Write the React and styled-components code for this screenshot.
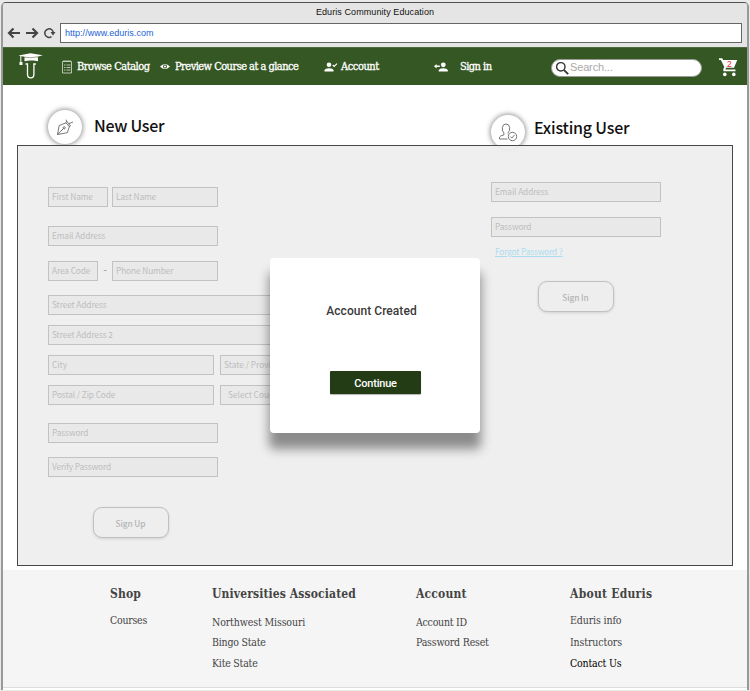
import React from "react";
import styled, { createGlobalStyle } from "styled-components";

const serif = `"DejaVu Serif Condensed", "DejaVu Serif", "Liberation Serif", serif`;
const source = `"Noto Sans CJK SC", "Noto Sans", sans-serif`;

const GlobalStyle = createGlobalStyle`
  * { box-sizing: border-box; }
  body { margin: 0; background: #e9e9e9; overflow: hidden; }
  button, input { margin: 0; padding: 0; }
`;

const Window = styled.div`
  position: relative;
  width: 748px;
  height: 688px;
  margin: 2px 0 0 1px;
  border: 1px solid #505050;
  border-left: 2px solid #999;
  border-right: 2px solid #999;
  border-bottom: 0;
  border-radius: 5px 5px 0 0;
  background: #fff;
  display: flex;
  flex-direction: column;
`;
const Chrome = styled.header`
  height: 44px;
  background: #e5e5e5;
  border-radius: 4px 4px 0 0;
  display: flex;
  flex-direction: column;
`;
const WindowTitle = styled.div`
  height: 20px;
  text-align: center;
  font: 9px/19px "Liberation Sans", sans-serif;
  letter-spacing: 0.08px;
  color: #111;
`;
const AddressRow = styled.div`
  display: flex;
  height: 20px;
  padding: 0 5px 0 4px;
`;
const ChromeIcons = styled.div`
  display: flex;
  width: 53px;
  svg { display: block; }
`;
const Address = styled.div`
  flex: 1;
  height: 20px;
  padding-left: 4px;
  background: #fff;
  border: 1px solid #666;
  font: 9px/18px "Liberation Sans", sans-serif;
  letter-spacing: 0.02px;
  color: #1c5fd6;
`;
const Nav = styled.nav`
  height: 38px;
  background: #355723;
  border-top: 1px solid #4d6b3c;
  display: flex;
  align-items: center;
  svg { display: block; flex: none; }
`;
const Logo = styled.div`
  width: 59px;
  padding-left: 15px;
`;
const NavLink = styled.a`
  width: ${(p) => p.$width}px;
  display: flex;
  align-items: center;
  gap: ${(p) => p.$gap}px;
  color: #fff;
  font: 11px/20px ${serif};
  -webkit-text-stroke: 0.3px #fff;
  letter-spacing: ${(p) => p.$track}px;
  white-space: nowrap;
`;
const Search = styled.div`
  width: 151px;
  height: 18px;
  margin-top: 2px;
  border: 1px solid #9a9a9a;
  border-radius: 9px;
  background: #fff;
  display: flex;
  align-items: center;
  gap: 1px;
  padding-left: 3px;
  font: 11px/15px "Liberation Sans", sans-serif;
  letter-spacing: -0.15px;
  color: #aaa;
`;
const SearchText = styled.span`
  height: 16px;
`;
const Cart = styled.div`
  position: relative;
  margin-left: 17px;
  width: 20px;
`;
const CartCount = styled.span`
  position: absolute;
  left: 8px;
  top: 2px;
  font: 8.5px/10px "Liberation Sans", sans-serif;
  color: #f5222d;
`;
const Headings = styled.div`
  height: 60px;
  display: flex;
  padding-left: 45px;
`;
const Heading = styled.div`
  width: ${(p) => p.$width}px;
  margin-top: ${(p) => p.$top}px;
  display: flex;
  gap: ${(p) => p.$gap}px;
`;
const Circle = styled.div`
  width: 34px;
  height: 34px;
  border-radius: 50%;
  background: #fff;
  box-shadow: 0 0 5px 1px rgba(0, 0, 0, 0.42);
  display: flex;
  align-items: center;
  justify-content: center;
`;
const HeadingText = styled.h2`
  margin: 0;
  font: 500 16px/${(p) => p.$line}px ${source};
  letter-spacing: ${(p) => p.$track}px;
  color: #111;
`;
const Panel = styled.main`
  position: relative;
  width: 716px;
  height: 421px;
  margin-left: 14px;
  border: 1px solid #484848;
  background: rgba(238, 238, 238, 0.93);
  display: flex;
  padding-left: 30px;
`;
const SignUpForm = styled.form`
  width: 443px;
  padding-top: 41px;
`;
const SignInForm = styled.form`
  width: 170px;
  padding-top: 36px;
`;
const FieldRow = styled.div`
  display: flex;
  height: 20px;
  margin-bottom: ${(p) => p.$after}px;
`;
const Field = styled.div`
  width: ${(p) => p.$width}px;
  height: 20px;
  margin-right: ${(p) => p.$after || 0}px;
  padding-left: ${(p) => p.$indent || 3}px;
  border: 1px solid #c2c2c2;
  background: #e9e9e9;
  color: #bdbdbd;
  font: 8.3px/16px ${source};
  letter-spacing: ${(p) => p.$track || 0}px;
  white-space: nowrap;
`;
const Dash = styled.span`
  width: 14px;
  text-align: center;
  font: 700 10px/16px ${source};
  color: #aaa;
`;
const Forgot = styled.a`
  display: block;
  margin: 0 0 21px 4px;
  font: 8.4px/14px ${source};
  height: 16px;
  letter-spacing: -0.18px;
  color: #acdcf0;
  text-decoration: underline;
`;
const OutlineButton = styled.button`
  display: block;
  width: 76px;
  height: 31px;
  margin-left: ${(p) => p.$left}px;
  padding-right: 1px;
  border: 1px solid #c0c0c0;
  border-radius: 9px;
  background: #eee;
  box-shadow: 0 1px 3px rgba(0, 0, 0, 0.12);
  font: 500 8.3px/28px ${source};
  letter-spacing: -0.1px;
  color: #b4b4b4;
`;
const Modal = styled.section`
  position: absolute;
  left: 252px;
  top: 112px;
  width: 210px;
  height: 175px;
  border-radius: 4px;
  background: #fff;
  box-shadow: 0 15px 11px 1px rgba(0, 0, 0, 0.42);
  display: flex;
  flex-direction: column;
  align-items: center;
`;
const ModalTitle = styled.h3`
  margin: 44px 0 50px 3px;
  width: 100%;
  text-align: center;
  padding-right: 10px;
  font: 500 12px/19px Roboto, sans-serif;
  letter-spacing: 0.05px;
  color: #3a3a3a;
`;
const Continue = styled.button`
  width: 91px;
  height: 23px;
  border: 0;
  border-radius: 1px;
  background: #243c15;
  box-shadow: 0 1px 1px rgba(0, 0, 0, 0.3);
  color: #fff;
  padding: 3px 0 0 1px;
  font: 500 11px/20px Roboto, sans-serif;
  letter-spacing: -0.2px;
`;
const Footer = styled.footer`
  height: 118px;
  margin-top: 4px;
  background: #f5f5f5;
  border-bottom: 1px solid #ddd;
  display: flex;
  padding: 15px 0 0 107px;
`;
const FooterColumn = styled.div`
  width: ${(p) => p.$width}px;
  font: 10.5px/20px ${serif};
  white-space: nowrap;
  color: #444;
`;
const FooterTitle = styled.h4`
  margin: 0 0 ${(p) => p.$after}px;
  font: bold 12px/18px ${serif};
  letter-spacing: ${(p) => p.$track || 0.13}px;
`;
const FooterLink = styled.a`
  display: block;
  height: ${(p) => p.$height || 21}px;
  letter-spacing: ${(p) => p.$track || 0}px;
  color: ${(p) => (p.$current ? "#000" : "inherit")};
`;

function BrowserIcons() {
  return (
    <svg width="53" height="20" viewBox="7 23 53 20" fill="none" stroke="#444" strokeWidth="2">
      <path d="M20 33H9.500M13.500 28.500L9 33l4.500 4.500" strokeWidth="2.200" />
      <path d="M26 33h10.500M32.500 28.500L37 33l-4.500 4.500" strokeWidth="2.200" />
      <path d="M51.500 36.700A4.300 4.300 0 1 1 53.400 33" strokeWidth="1.500" />
      <path d="M50.500 32h5L53 35.500z" fill="#444" stroke="none" />
    </svg>
  );
}
function LogoIcon() {
  return (
    <svg width="26" height="28" viewBox="18.500 52.500 26 28">
      <path d="M19 55L31 52.700l12.300 2L37 56.400l1.500.6v3.800c-3-1.200-10-1.200-13.500 0v-4.200z" fill="#fff" />
      <path d="M23 56.400q8 1.700 14.500 0" fill="none" stroke="#355723" strokeWidth=".5" />
      <path d="M21.300 55.500v6" stroke="#fff" />
      <path d="M20 61.500h3v3h-3z" fill="#fff" />
      <path d="M26 63.500h2v10.200q0 3.700 3.200 3.700t3.200-3.700V63.500h2" fill="none" stroke="#fff" strokeWidth="1.300" />
    </svg>
  );
}
function ListIcon() {
  return (
    <svg width="11" height="14" viewBox="0 0 11 14" fill="none" stroke="#d9e1d5" strokeWidth=".8">
      <path d="M.5 1.500h9v11.500h-9zM2 0v2M4 0v2M6 0v2M8 0v2M2 5h1.500M4.500 5H8.500M2 7.500h1.500M4.500 7.500H8.500M2 10h1.500M4.500 10H8.500" />
    </svg>
  );
}
function EyeIcon() {
  return (
    <svg width="10" height="7" viewBox="0 0 10 7">
      <path d="M0 3.500Q5-1.500 10 3.500Q5 8.500 0 3.500z" fill="#fff" />
      <circle cx="5" cy="3.500" r="2" fill="#355723" />
      <circle cx="5" cy="3.500" r="1.100" fill="#fff" />
    </svg>
  );
}
function AccountIcon() {
  return (
    <svg width="14" height="10" viewBox="0 0 14 10">
      <circle cx="5" cy="2.800" r="2.300" fill="#fff" />
      <path d="M.5 9.500V8.300Q1 6.200 5 6.200t4.500 2.100v1.200z" fill="#fff" />
      <path d="M8.700 3l1.500 1.500L13 1.600" fill="none" stroke="#fff" strokeWidth="1.100" />
    </svg>
  );
}
function SignInIcon() {
  return (
    <svg width="14" height="10" viewBox="0 0 14 10">
      <circle cx="9.300" cy="2.800" r="2.400" fill="#fff" />
      <path d="M4.800 9.500V8.300Q5.500 6.200 9.300 6.200t4.500 2.100v1.200z" fill="#fff" />
      <path d="M2.600 2L0 4.200l2.600 2.200V5h3.200V3.400H2.600z" fill="#fff" />
    </svg>
  );
}
function SearchIcon() {
  return (
    <svg width="14" height="14" viewBox="0 0 14 14" fill="none" stroke="#333">
      <circle cx="5.800" cy="5.800" r="4.200" strokeWidth="1.400" />
      <path d="M8.800 8.800l4.400 4.400" strokeWidth="1.800" />
    </svg>
  );
}
function CartIcon() {
  return (
    <svg width="20" height="20" viewBox="0 0 20 20" fill="#fff">
      <path d="M0 1.300h3.200l.9 1.700H18.300L15 10.700H7.200L6.300 12.500H16.500v1.800H4.800q-1.500-1 0-3.400L5.300 10 1.900 3H0z" />
      <circle cx="5.800" cy="17.400" r="1.800" />
      <circle cx="14.800" cy="17.400" r="1.800" />
    </svg>
  );
}
function PenIcon() {
  return (
    <svg width="18" height="18" viewBox="0 0 18 18" fill="none" stroke="#555" strokeWidth=".8">
      <path d="M1.500 16.500L3.200 7.500 10 4.800l3.300 3.900-2 6zM1.500 16.500l6-6M10 4.800l.7-1.600L14.500 8l-1.200.7M10.700 3.200L10 1.700M12.800 5.700L17 4" />
      <circle cx="8.200" cy="9.800" r="1.100" />
    </svg>
  );
}
function UserCheckIcon() {
  return (
    <svg width="20" height="20" viewBox="0 0 20 20" fill="none" stroke="#666" strokeWidth=".9">
      <path d="M9.500 17H1.500v-1.800q.5-1.500 4.400-2.300v-2Q4 9.500 4.300 5.500 4.800 2 8 2t3.700 3.500q.2 3.500-1.600 5.200v1" />
      <circle cx="14.500" cy="14.500" r="4.200" />
      <path d="M12.300 14.500l1.600 1.600 2.700-3.200" />
    </svg>
  );
}

export default function App() {
  return (
    <>
      <GlobalStyle />
      <Window>
        <Chrome>
          <WindowTitle>Eduris Community Education</WindowTitle>
          <AddressRow>
            <ChromeIcons><BrowserIcons /></ChromeIcons>
            <Address>http://www.eduris.com</Address>
          </AddressRow>
        </Chrome>
        <Nav>
          <Logo><LogoIcon /></Logo>
          <NavLink $width={98} $gap={4} $track={-0.48}><ListIcon />Browse Catalog</NavLink>
          <NavLink $width={164} $gap={5} $track={-0.54}><EyeIcon />Preview Course at a glance</NavLink>
          <NavLink $width={110} $gap={3} $track={-0.45}><AccountIcon />Account</NavLink>
          <NavLink $width={117} $gap={12} $track={-0.55}><SignInIcon />Sign in</NavLink>
          <Search><SearchIcon /><SearchText>Search...</SearchText></Search>
          <Cart><CartIcon /><CartCount>2</CartCount></Cart>
        </Nav>
        <Headings>
          <Heading $width={443} $top={25} $gap={12}>
            <Circle><PenIcon /></Circle>
            <HeadingText $line={31} $track={-0.3}>New User</HeadingText>
          </Heading>
          <Heading $width={200} $top={30} $gap={9}>
            <Circle><UserCheckIcon /></Circle>
            <HeadingText $line={25} $track={-0.2}>Existing User</HeadingText>
          </Heading>
        </Headings>
        <Panel>
          <SignUpForm>
            <FieldRow $after={19}><Field $width={60} $after={4} $track={-0.08}>First Name</Field><Field $width={106} $track={-0.08}>Last Name</Field></FieldRow>
            <FieldRow $after={15}><Field $width={170} $track={-0.1}>Email Address</Field></FieldRow>
            <FieldRow $after={14}><Field $width={50} $track={-0.1}>Area Code</Field><Dash>-</Dash><Field $width={106} $track={-0.1}>Phone Number</Field></FieldRow>
            <FieldRow $after={10}><Field $width={348} $track={-0.1}>Street Address</Field></FieldRow>
            <FieldRow $after={10}><Field $width={348} $track={-0.1}>Street Address 2</Field></FieldRow>
            <FieldRow $after={10}><Field $width={166} $after={6}>City</Field><Field $width={176}>State / Province</Field></FieldRow>
            <FieldRow $after={18}><Field $width={166} $after={6} $track={-0.1}>Postal / Zip Code</Field><Field $width={176} $indent={7}>Select Country</Field></FieldRow>
            <FieldRow $after={14}><Field $width={170} $track={-0.1}>Password</Field></FieldRow>
            <FieldRow $after={30}><Field $width={170} $track={-0.12}>Verify Password</Field></FieldRow>
            <OutlineButton type="button" $left={45}>Sign Up</OutlineButton>
          </SignUpForm>
          <SignInForm>
            <FieldRow $after={15}><Field $width={170} $track={-0.1}>Email Address</Field></FieldRow>
            <FieldRow $after={7}><Field $width={170} $track={-0.1}>Password</Field></FieldRow>
            <Forgot>Forgot Password ?</Forgot>
            <OutlineButton type="button" $left={47}>Sign In</OutlineButton>
          </SignInForm>
          <Modal>
            <ModalTitle>Account Created</ModalTitle>
            <Continue>Continue</Continue>
          </Modal>
        </Panel>
        <Footer>
          <FooterColumn $width={102}>
            <FooterTitle $after={7}>Shop</FooterTitle>
            <FooterLink $track={-0.25}>Courses</FooterLink>
          </FooterColumn>
          <FooterColumn $width={204}>
            <FooterTitle $after={9}>Universities Associated</FooterTitle>
            <FooterLink $height={20} $track={-0.12}>Northwest Missouri</FooterLink>
            <FooterLink $track={-0.22}>Bingo State</FooterLink>
            <FooterLink $track={-0.22}>Kite State</FooterLink>
          </FooterColumn>
          <FooterColumn $width={154}>
            <FooterTitle $after={9} $track={0.18}>Account</FooterTitle>
            <FooterLink $height={20} $track={-0.25}>Account ID</FooterLink>
            <FooterLink $track={-0.2}>Password Reset</FooterLink>
          </FooterColumn>
          <FooterColumn $width={120}>
            <FooterTitle $after={7} $track={0.25}>About Eduris</FooterTitle>
            <FooterLink $height={22} $track={-0.12}>Eduris info</FooterLink>
            <FooterLink $track={-0.12}>Instructors</FooterLink>
            <FooterLink $current $track={-0.2}>Contact Us</FooterLink>
          </FooterColumn>
        </Footer>
      </Window>
    </>
  );
}
